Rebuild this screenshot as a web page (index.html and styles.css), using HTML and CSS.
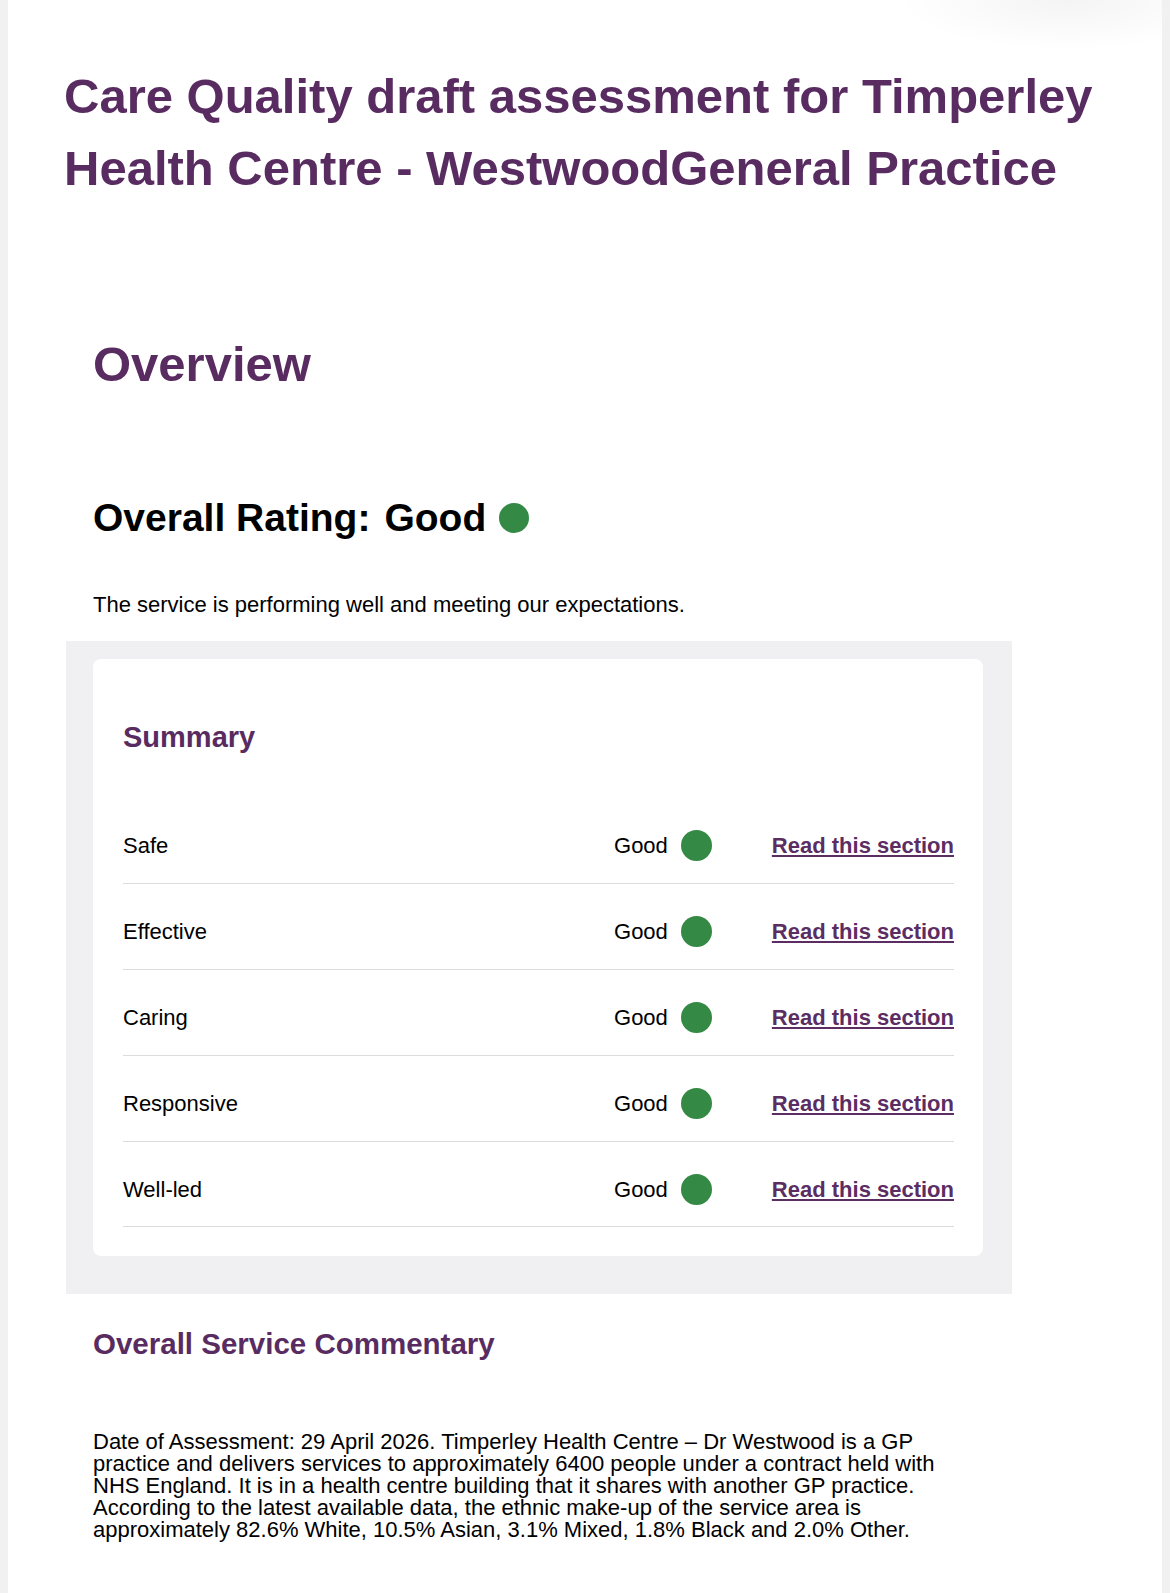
FILE: index.html
```html
<!DOCTYPE html>
<html lang="en">
<head>
    <meta charset="UTF-8">
    <title>Care Quality draft assessment</title>
    <link rel="stylesheet" href="styles.css">
</head>
<body>

    <div class="page">

        <h1 class="title">Care Quality draft assessment for Timperley Health Centre - WestwoodGeneral Practice</h1>

        <div class="overview">
            <h2 class="section-title">Overview</h2>

            <h3 class="overall">Overall Rating: <span class="overall-value">Good</span> <span class="dot dot-lg"></span></h3>

            <p class="lead">The service is performing well and meeting our expectations.</p>

            <div class="summary-box">
                <div class="summary-card">
                    <h4 class="summary-title">Summary</h4>

                    <div class="row">
                        <span class="row-name">Safe</span>
                        <span class="rating">Good <span class="dot"></span></span>
                        <a class="row-link" href="#safe">Read this section</a>
                    </div>
                    <div class="row">
                        <span class="row-name">Effective</span>
                        <span class="rating">Good <span class="dot"></span></span>
                        <a class="row-link" href="#effective">Read this section</a>
                    </div>
                    <div class="row">
                        <span class="row-name">Caring</span>
                        <span class="rating">Good <span class="dot"></span></span>
                        <a class="row-link" href="#caring">Read this section</a>
                    </div>
                    <div class="row">
                        <span class="row-name">Responsive</span>
                        <span class="rating">Good <span class="dot"></span></span>
                        <a class="row-link" href="#responsive">Read this section</a>
                    </div>
                    <div class="row">
                        <span class="row-name">Well-led</span>
                        <span class="rating">Good <span class="dot"></span></span>
                        <a class="row-link" href="#well-led">Read this section</a>
                    </div>
                </div>
            </div>

            <h4 class="commentary-title">Overall Service Commentary</h4>

            <p class="commentary">Date of Assessment: 29 April 2026. Timperley Health Centre – Dr Westwood is a GP practice and delivers services to approximately 6400 people under a contract held with NHS England. It is in a health centre building that it shares with another GP practice. According to the latest available data, the ethnic make-up of the service area is approximately 82.6% White, 10.5% Asian, 3.1% Mixed, 1.8% Black and 2.0% Other.</p>
        </div>

    </div>

</body>
</html>
```

FILE: styles.css
```css
html, body {
    margin: 0;
    padding: 0;
}
body {
    background: #f1f1f1;
    font-family: "Liberation Sans", Arial, sans-serif;
    color: #0b0c0c;
}
.page {
    margin: 0 8px;
    min-height: 1593px;
    box-sizing: border-box;
    padding: 60px 0 40px 56px;
    background: radial-gradient(ellipse 170px 50px at 1060px 0, rgba(0,0,0,0.045), rgba(0,0,0,0)) , #fff;
}
.title {
    margin: 0;
    font-size: 49px;
    line-height: 72px;
    font-weight: bold;
    color: #592c61;
}
.overview {
    padding-left: 29px;
}
.section-title {
    margin: 132px 0 0;
    font-size: 49px;
    line-height: normal;
    color: #592c61;
}
.overall {
    margin: 104px 0 0;
    font-size: 39px;
    line-height: normal;
    display: flex;
    align-items: center;
    color: #000;
}
.overall-value {
    margin-left: 14px;
}
.dot {
    display: inline-block;
    width: 31px;
    height: 31px;
    border-radius: 50%;
    background: #348944;
}
.dot-lg {
    width: 30px;
    height: 30px;
    margin-left: 13px;
}
.lead {
    margin: 52px 0 0;
    font-size: 22px;
    line-height: normal;
    color: #000;
}

/* grey band around the summary card */
.summary-box {
    margin: 23px 0 0 -27px;
    width: 946px;
    background: #f0f0f2;
    padding: 18px 29px 38px 27px;
    box-sizing: border-box;
}
.summary-card {
    background: #fff;
    border-radius: 8px;
    padding: 62px 29px 29px 30px;
}
.summary-title {
    margin: 0 0 44px;
    font-size: 29px;
    line-height: normal;
    color: #592c61;
}
.row {
    display: grid;
    grid-template-columns: 1fr auto auto;
    column-gap: 60px;
    align-items: center;
    padding: 32px 0 22px;
    border-bottom: 1px solid #dcdcdc;
    font-size: 22px;
}
.row:last-child {
    padding-bottom: 21px;
}
.row-name {
    color: #000;
}
.rating {
    display: flex;
    align-items: center;
    gap: 13px;
    color: #000;
}
.row-link {
    font-size: 22px;
    font-weight: bold;
    color: #5b2d63;
    text-decoration: underline;
    white-space: nowrap;
}
.commentary-title {
    margin: 33px 0 0;
    font-size: 29.5px;
    line-height: normal;
    color: #592c61;
}
.commentary {
    margin: 70px 0 0;
    max-width: 870px;
    font-size: 22px;
    line-height: 22px;
    color: #000;
}
```
